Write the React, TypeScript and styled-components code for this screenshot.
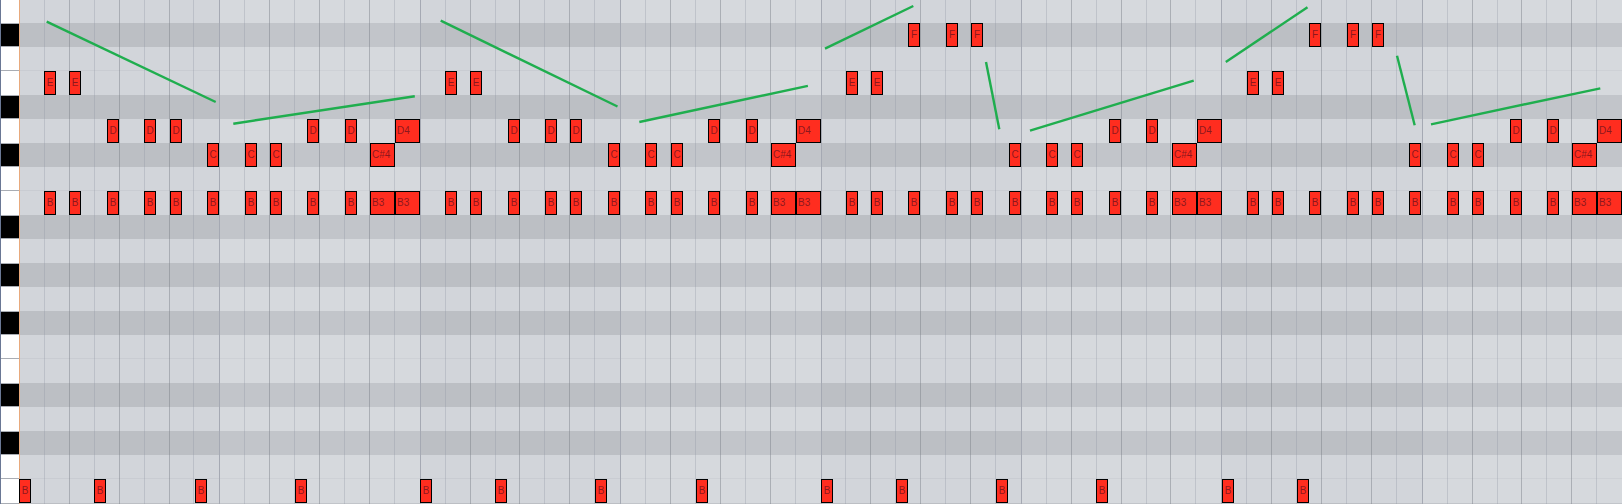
import styled, { createGlobalStyle } from 'styled-components';

const STEP = 25.05;
const ORIGIN = 19.2;
const ROW_TOP = 23;
const ROW = 24;

// pitch rows from the top of the roll, row 0 is the clipped key above the first black one
const BLACK_ROWS = [1, 4, 6, 9, 11, 13, 16, 18, 21];
const SPLIT_ROWS = [2, 7, 14, 19];
const ROW_COUNT = 22;

type NoteType = {
  row: number;
  step: number;
  label: string;
  long?: boolean;
};

const GlobalStyle = createGlobalStyle`
  html, body {
    margin: 0;
    padding: 0;
    background: #d2d5da;
    overflow: hidden;
  }
`;

const Roll = styled.div`
  display: flex;
  width: 1622px;
  height: 504px;
  overflow: hidden;
`;

const Keyboard = styled.div`
  display: flex;
  flex-direction: column;
  flex: 0 0 20px;
  border-left: 1px solid #6a7895;
  border-right: 1px solid #e8a97c;
  box-sizing: border-box;
  background: #fff;
`;

const Key = styled.div<{ $black: boolean; $split: boolean; $first: boolean }>`
  flex: 0 0 ${p => (p.$first ? ROW_TOP : ROW)}px;
  box-sizing: border-box;
  background: ${p => (p.$black ? '#000' : '#fff')};
  border-bottom: 1px solid ${p => (p.$split ? '#a9adb4' : p.$black ? '#a9adb4' : '#fff')};
  border-top: ${p => (p.$black ? '1px solid #a9adb4' : 'none')};
`;

const Grid = styled.div`
  position: relative;
  flex: 1;
`;

const Lanes = styled.div`
  display: flex;
  flex-direction: column;
`;

const Lane = styled.div<{ $black: boolean; $split: boolean; $first: boolean }>`
  flex: 0 0 ${p => (p.$first ? ROW_TOP : ROW)}px;
  box-sizing: border-box;
  background: ${p => (p.$black ? '#bcbfc4' : '#d2d5da')};
  border-bottom: 1px solid ${p => (p.$split ? '#c9ccd2' : 'transparent')};
`;

const Bars = styled.div`
  position: absolute;
  inset: 0;
  display: grid;
  grid-template-columns: repeat(8, ${STEP * 8}px);
`;

const Bar = styled.div<{ $lit: boolean }>`
  display: grid;
  grid-template-columns: repeat(8, 1fr);
  background: ${p => (p.$lit ? 'rgba(255, 255, 255, 0.1)' : 'transparent')};
  border-right: 1px solid #a5a9b3;
  box-sizing: border-box;
`;

const Beat = styled.div<{ $strong: boolean }>`
  border-right: 1px solid ${p => (p.$strong ? 'rgba(120, 124, 134, 0.45)' : 'rgba(140, 146, 160, 0.3)')};

  &:last-child {
    border-right: none;
  }
`;

const Sketch = styled.svg`
  position: absolute;
  left: -20px;
  top: 0;
  width: 1622px;
  height: 504px;
`;

const Note = styled.div.attrs<{ $left: number; $top: number }>(p => ({
  style: { left: p.$left, top: p.$top },
}))<{ $left: number; $top: number; $long: boolean }>`
  position: absolute;
  box-sizing: border-box;
  width: ${p => (p.$long ? 25 : 12)}px;
  height: 24px;
  padding-left: ${p => (p.$long ? 1 : 0)}px;
  background: #ff2d1f;
  border: 1px solid #000;
  color: rgba(120, 20, 30, 0.85);
  font: 10px/21px 'Liberation Sans', Arial, sans-serif;
  text-align: ${p => (p.$long ? 'left' : 'center')};
  white-space: nowrap;
  overflow: hidden;
`;

// one phrase of two bars, the top line changes between phrases
const phrase = (start: number, melody: NoteType[]): NoteType[] => [
  ...melody,
  ...[7.5, 9, 10].map(step => ({ row: 6, step, label: 'C' })),
  ...[11.5, 13].map(step => ({ row: 5, step, label: 'D' })),
  { row: 6, step: 14, label: 'C#4', long: true },
  { row: 5, step: 15, label: 'D4', long: true },
  ...[1, 2, 3.5, 5, 6, 7.5, 9, 10, 11.5, 13].map(step => ({ row: 8, step, label: 'B' })),
  { row: 8, step: 14, label: 'B3', long: true },
  { row: 8, step: 15, label: 'B3', long: true },
].map(n => ({ ...n, step: n.step + start }));

const hook = (row: number, label: string): NoteType[] => [
  { row: 3, step: 1, label: 'E' },
  { row: 3, step: 2, label: 'E' },
  ...[3.5, 5, 6].map(step => ({ row, step, label })),
];

const bassSteps = [0, 3, 7, 11, 16, 19, 23, 27, 32, 35, 39, 43, 48, 51];

const notes: NoteType[] = [
  ...phrase(0, hook(5, 'D')),
  ...phrase(16, hook(5, 'D')),
  ...phrase(32, hook(1, 'F')),
  ...phrase(48, hook(1, 'F')),
  ...bassSteps.map(step => ({ row: 20, step, label: 'B' })),
];

const strokes = [
  [46.7, 21.7, 215.7, 102],
  [233.3, 123.7, 414.8, 96.2],
  [440.7, 20.7, 617.5, 106.5],
  [639.3, 122, 807.9, 85.9],
  [825, 48.7, 913.3, 6],
  [986, 62, 999.3, 129.3],
  [1030, 130.7, 1193.7, 80.7],
  [1225.8, 62, 1307.5, 7.2],
  [1397, 55.7, 1414.7, 125.3],
  [1431, 124.3, 1600.3, 88.3],
];

const rows = Array.from({ length: ROW_COUNT }, (_, i) => ({
  id: i,
  black: BLACK_ROWS.includes(i),
  split: SPLIT_ROWS.includes(i),
}));

const App = () => {
  return (
    <Roll>
      <GlobalStyle />
      <Keyboard>
        {rows.map(r => (
          <Key key={r.id} $black={r.black} $split={r.split} $first={r.id === 0} />
        ))}
      </Keyboard>
      <Grid>
        <Lanes>
          {rows.map(r => (
            <Lane key={r.id} $black={r.black} $split={r.split} $first={r.id === 0} />
          ))}
        </Lanes>
        <Bars>
          {Array.from({ length: 8 }, (_, b) => (
            <Bar key={b} $lit={b % 2 === 1}>
              {Array.from({ length: 8 }, (_, s) => (
                <Beat key={s} $strong={s % 2 === 1} />
              ))}
            </Bar>
          ))}
        </Bars>
        {notes.map((n, i) => (
          <Note
            key={i}
            $left={Math.round(ORIGIN + n.step * STEP) - 20}
            $top={n.row === 0 ? 0 : ROW_TOP + (n.row - 1) * ROW}
            $long={!!n.long}
          >
            {n.label}
          </Note>
        ))}
        <Sketch viewBox="0 0 1622 504">
          {strokes.map(([x1, y1, x2, y2], i) => (
            <line key={i} x1={x1} y1={y1} x2={x2} y2={y2} stroke="#1fae4e" strokeWidth={2.4} />
          ))}
        </Sketch>
      </Grid>
    </Roll>
  );
};

export default App;
